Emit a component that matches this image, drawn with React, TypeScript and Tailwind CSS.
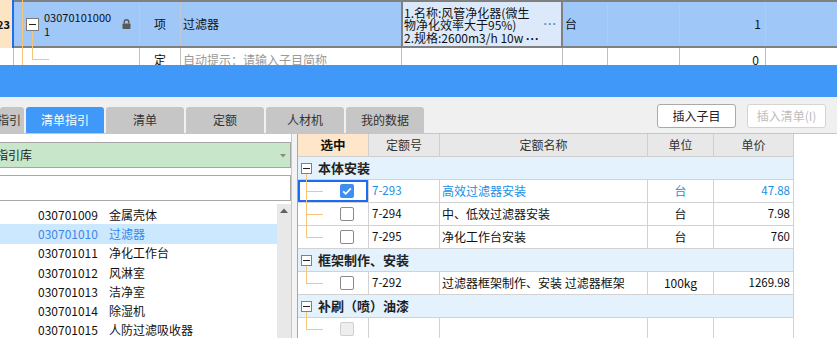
import React from "react";

const FONT = "font-['Noto_Sans_CJK_SC','Microsoft_YaHei',sans-serif]";

function Lock() {
  return (
    <svg width="9" height="10" viewBox="0 0 9 10">
      <path d="M2.2 4.6V3.1a2.3 2.3 0 0 1 4.6 0v1.5" fill="none" stroke="#595959" strokeWidth="1.4" />
      <rect x="0.5" y="4.4" width="8" height="5.6" rx="0.8" fill="#595959" />
    </svg>
  );
}

function CheckBox({ kind }: { kind: "on" | "off" | "disabled" }) {
  if (kind === "on")
    return (
      <div className="w-[14px] h-[14px] rounded-[2px] bg-[#3d8ef0] flex items-center justify-center">
        <svg width="14" height="14" viewBox="0 0 14 14">
          <path d="M3.2 7.3l2.5 2.5L10.9 4.4" fill="none" stroke="#fff" strokeWidth="1.8" />
        </svg>
      </div>
    );
  if (kind === "disabled")
    return <div className="w-[14px] h-[14px] rounded-[2px] border border-[#d0d0d0] bg-[#eeeeee]" />;
  return <div className="w-[14px] h-[14px] rounded-[2px] border border-[#8a8a8a] bg-white" />;
}

type Row =
  | { type: "group"; title: string }
  | {
      type: "item";
      code: string;
      name: string;
      unit: string;
      price: string;
      last: boolean;
      check: "on" | "off" | "disabled";
      active?: boolean;
    };

const rows: Row[] = [
  { type: "group", title: "本体安装" },
  { type: "item", code: "7-293", name: "高效过滤器安装", unit: "台", price: "47.88", last: false, check: "on", active: true },
  { type: "item", code: "7-294", name: "中、低效过滤器安装", unit: "台", price: "7.98", last: false, check: "off" },
  { type: "item", code: "7-295", name: "净化工作台安装", unit: "台", price: "760", last: true, check: "off" },
  { type: "group", title: "框架制作、安装" },
  { type: "item", code: "7-292", name: "过滤器框架制作、安装 过滤器框架", unit: "100kg", price: "1269.98", last: true, check: "off" },
  { type: "group", title: "补刷（喷）油漆" },
  { type: "item", code: "", name: "", unit: "", price: "", last: true, check: "disabled" },
];

const listItems = [
  ["030701009", "金属壳体"],
  ["030701010", "过滤器"],
  ["030701011", "净化工作台"],
  ["030701012", "风淋室"],
  ["030701013", "洁净室"],
  ["030701014", "除湿机"],
  ["030701015", "人防过滤吸收器"],
];

const tabs = ["清单指引", "清单", "定额", "人材机", "我的数据"];

export default function App() {
  return (
    <div className={`w-[837px] h-[338px] overflow-hidden bg-[#f0f0f0] text-[12px] text-[#111] ${FONT}`}>
      {/* top grid */}
      <div className="relative h-[65px] overflow-hidden bg-white">
        {/* row 1 */}
        <div className="flex h-[48px]">
          <div className="w-[12px] bg-[#fde4c2] flex items-center justify-end overflow-hidden pr-[2px]">
            <span className="font-bold text-[11px] whitespace-nowrap">23</span>
          </div>
          <div className="w-[2px] bg-[#1a6ef5]" />
          <div className="flex flex-1 border-y-2 border-[#808080] bg-[#9fc8f9]">
            <div className="w-[126px] flex items-center pl-[12px] border-r border-[#c2c9d3]">
              <div className="w-[13px] h-[13px] border border-[#7a7a7a] bg-white flex items-center justify-center">
                <div className="w-[7px] h-px bg-[#222]" />
              </div>
              <div className="ml-[5px] leading-[14.5px] text-[11px]">
                <div>03070101000</div>
                <div>1</div>
              </div>
              <div className="ml-auto mr-[8px] flex items-center">
                <Lock />
              </div>
            </div>
            <div className="w-[41px] flex items-center justify-center border-r border-[#c2c9d3]">项</div>
            <div className="w-[220px] flex items-center pl-[2px]">过滤器</div>
            <div className="relative w-[162px] border-x-2 border-[#808080] bg-[#dbe9fb] pl-px pt-[5px] leading-[12.3px] text-[12px] whitespace-nowrap overflow-hidden">
              <div>1.名称:风管净化器(微生</div>
              <div>物净化效率大于95%)</div>
              <div>
                2.规格:2600m3/h 10w <span className="font-['Liberation_Sans',sans-serif] font-bold tracking-[0.5px]">···</span>
              </div>
              <span className="absolute right-[4px] top-[16px] text-[#5b8fd6] text-[12px] font-bold tracking-[0.5px] font-['Liberation_Sans',sans-serif]">
                ···
              </span>
            </div>
            <div className="w-[45px] flex items-center pl-[2px] border-r border-[#c2c9d3]">台</div>
            <div className="w-[72px] border-r border-[#c2c9d3]" />
            <div className="w-[86px] flex items-center justify-end pr-[4px] border-r border-[#c2c9d3]">1</div>
            <div className="flex-1" />
          </div>
        </div>
        {/* row 2 */}
        <div className="flex h-[23px]">
          <div className="w-[14px] border-r border-[#c0c0c0]" />
          <div className="w-[126px] border-r border-[#c0c0c0]" />
          <div className="w-[41px] flex items-center justify-center border-r border-[#c0c0c0]">定</div>
          <div className="w-[221px] flex items-center pl-[2px] border-r border-[#c0c0c0] text-[#9a9a9a] whitespace-nowrap overflow-hidden">
            自动提示：请输入子目简称
          </div>
          <div className="w-[161px] border-r border-[#c0c0c0]" />
          <div className="w-[45px] border-r border-[#c0c0c0]" />
          <div className="w-[72px] border-r border-[#c0c0c0]" />
          <div className="w-[86px] flex items-center justify-end pr-[6px] border-r border-[#c0c0c0]">0</div>
          <div className="flex-1" />
        </div>
        {/* tree connectors */}
        <div className="absolute left-[22px] top-0 w-px h-[65px] bg-[#f7c47c]" />
        <div className="absolute left-[22px] top-[24px] w-[4px] h-px bg-[#f7c47c]" />
        <div className="absolute left-[32px] top-[31px] w-px h-[28px] bg-[#f7c47c]" />
        <div className="absolute left-[32px] top-[59px] w-[17px] h-px bg-[#f7c47c]" />
      </div>

      {/* blue band */}
      <div className="h-[32px] bg-[#4099f8]" />

      {/* tab bar */}
      <div className="flex h-[36px] bg-[#f0f0f0] justify-between">
        <div className="flex self-end gap-[2px]">
          <div className="w-[24px] h-[26px] rounded-t-[3px] bg-[#c6c6c6] flex items-center justify-end pr-[3px] overflow-hidden text-[#333]">
            <span className="whitespace-nowrap shrink-0">指引</span>
          </div>
          {tabs.map((t, i) => (
            <div
              key={t}
              className={
                i === 0
                  ? "w-[78px] h-[26px] rounded-t-[3px] bg-[#4099f8] text-white flex items-center justify-center"
                  : "w-[78px] h-[26px] rounded-t-[3px] bg-[#c6c6c6] text-[#333] flex items-center justify-center"
              }
            >
              {t}
            </div>
          ))}
        </div>
        <div className="flex gap-[11px] mt-[7px] mr-[11px] self-start">
          <div className="w-[79px] h-[24px] rounded-[3px] border border-[#a9a9a9] bg-white flex items-center justify-center text-[#222]">
            插入子目
          </div>
          <div className="w-[79px] h-[24px] rounded-[3px] border border-[#d4d4d4] bg-white flex items-center justify-center text-[#bdbdbd]">
            插入清单(I)
          </div>
        </div>
      </div>

      {/* content */}
      <div className="flex h-[205px] border-t border-[#c6c6c6] bg-white">
        {/* left panel */}
        <div className="w-[292px] border-r border-[#c8c8c8] pt-[8px] flex flex-col">
          <div className="w-[291px] h-[26px] bg-[#c8e6ca] border border-l-0 border-[#a6a6a6] flex items-center overflow-hidden relative">
            <span className="ml-[-28px] whitespace-nowrap text-[#222]">清单指引库</span>
            <svg className="absolute right-[4px] top-[11px]" width="6" height="4" viewBox="0 0 6 4">
              <path d="M0 0h6L3 3.5z" fill="#8a8a8a" />
            </svg>
          </div>
          <div className="w-[291px] h-[26px] mt-[7px] bg-white border border-l-0 border-[#a9a9a9]" />
          <div className="flex flex-1 mt-[3px] overflow-hidden">
            <div className="flex-1 pt-[1px]">
              {listItems.map(([c, n], i) => (
                <div
                  key={c}
                  className={
                    i === 1
                      ? "h-[19.3px] flex items-center pl-[38px] bg-[#cce8ff] text-[#3b86e6] whitespace-nowrap"
                      : "h-[19.3px] flex items-center pl-[38px] text-[#111] whitespace-nowrap"
                  }
                >
                  <span className="w-[71px]">{c}</span>
                  <span>{n}</span>
                </div>
              ))}
            </div>
            <div className="w-[14px] bg-[#e8e8e8] flex justify-center pt-[4px]">
              <svg width="8" height="5" viewBox="0 0 8 5">
                <path d="M0 5L4 0.5 8 5z" fill="#606060" />
              </svg>
            </div>
          </div>
        </div>
        <div className="w-[5px] bg-[#f3f3f3]" />
        {/* right table */}
        <div className="w-[497px] border-l border-[#a8a8a8] overflow-hidden">
          <div className="grid grid-cols-[71px_71px_208px_66px_80px]">
            <div className="h-[23px] bg-[#fde6c9] border-r border-b border-[#cfcfcf] flex items-center justify-center font-bold text-[12.5px]">
              选中
            </div>
            <div className="h-[23px] bg-[#e8e8e8] border-r border-b border-[#cfcfcf] flex items-center justify-center text-[#333]">
              定额号
            </div>
            <div className="h-[23px] bg-[#e8e8e8] border-r border-b border-[#cfcfcf] flex items-center justify-center text-[#333]">
              定额名称
            </div>
            <div className="h-[23px] bg-[#e8e8e8] border-r border-b border-[#cfcfcf] flex items-center justify-center text-[#333]">
              单位
            </div>
            <div className="h-[23px] bg-[#e8e8e8] border-r border-b border-[#cfcfcf] flex items-center justify-center text-[#333]">
              单价
            </div>
            {rows.map((r, idx) =>
              r.type === "group" ? (
                <div
                  key={idx}
                  className="col-span-5 h-[23px] bg-[#e4f2fe] border-r border-b border-[#d2d2d2] flex items-center pl-[3px] relative"
                >
                  <div className="w-[11px] h-[11px] border border-[#808080] bg-white flex items-center justify-center">
                    <div className="w-[7px] h-px bg-[#222]" />
                  </div>
                  <span className="ml-[6px] font-bold text-[13px] text-[#222]">{r.title}</span>
                  <div className="absolute left-[8px] top-[17px] w-px h-[6px] bg-[#f7c47c]" />
                </div>
              ) : (
                <React.Fragment key={idx}>
                  <div
                    className={
                      r.active
                        ? "relative h-[23px] border-r border-b border-[#d2d2d2] flex items-center pl-[42px] shadow-[inset_0_0_0_2px_#1a6cf0]"
                        : "relative h-[23px] border-r border-b border-[#d2d2d2] flex items-center pl-[42px]"
                    }
                  >
                    <div
                      className={
                        r.last
                          ? "absolute left-[8px] top-0 w-px h-[11px] bg-[#f7c47c]"
                          : "absolute left-[8px] top-0 w-px h-[23px] bg-[#f7c47c]"
                      }
                    />
                    <div className="absolute left-[8px] top-[11px] w-[17px] h-px bg-[#f7c47c]" />
                    <CheckBox kind={r.check} />
                  </div>
                  <div
                    className={
                      r.active
                        ? "h-[23px] border-r border-b border-[#d2d2d2] flex items-center pl-[3px] text-[11.5px] text-[#1690e6]"
                        : "h-[23px] border-r border-b border-[#d2d2d2] flex items-center pl-[3px] text-[11.5px]"
                    }
                  >
                    {r.code}
                  </div>
                  <div
                    className={
                      r.active
                        ? "h-[23px] border-r border-b border-[#d2d2d2] flex items-center pl-[2px] whitespace-nowrap overflow-hidden text-[#1690e6]"
                        : "h-[23px] border-r border-b border-[#d2d2d2] flex items-center pl-[2px] whitespace-nowrap overflow-hidden"
                    }
                  >
                    {r.name}
                  </div>
                  <div
                    className={
                      r.active
                        ? "h-[23px] border-r border-b border-[#d2d2d2] flex items-center justify-center text-[#1690e6]"
                        : "h-[23px] border-r border-b border-[#d2d2d2] flex items-center justify-center"
                    }
                  >
                    {r.unit}
                  </div>
                  <div
                    className={
                      r.active
                        ? "h-[23px] border-r border-b border-[#d2d2d2] flex items-center justify-end pr-[3px] text-[11.5px] text-[#1690e6]"
                        : "h-[23px] border-r border-b border-[#d2d2d2] flex items-center justify-end pr-[3px] text-[11.5px]"
                    }
                  >
                    {r.price}
                  </div>
                </React.Fragment>
              )
            )}
          </div>
        </div>
        <div className="flex-1 bg-white" />
      </div>
    </div>
  );
}
